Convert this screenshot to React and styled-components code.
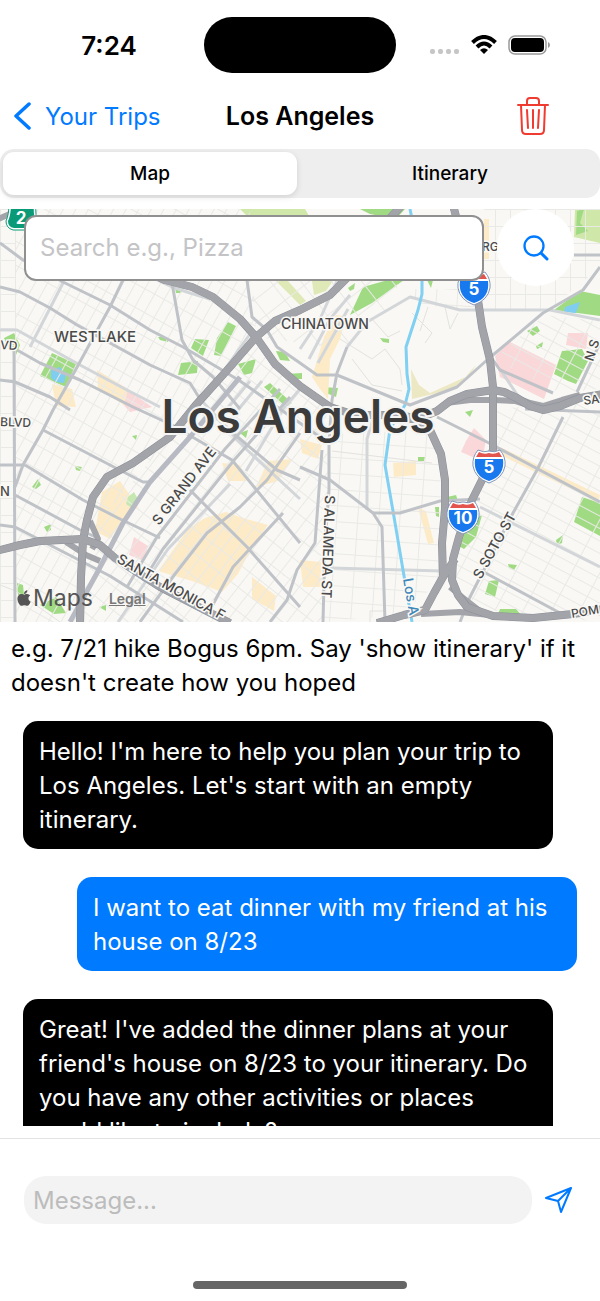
import React, { useState } from 'react';
import styled, { createGlobalStyle } from 'styled-components';
import { FaApple } from 'react-icons/fa';

const messages = [
    { id: 1, from: 'bot', text: "Hello! I'm here to help you plan your trip to Los Angeles. Let's start with an empty itinerary." },
    { id: 2, from: 'user', text: 'I want to eat dinner with my friend at his house on 8/23' },
    { id: 3, from: 'bot', text: "Great! I've added the dinner plans at your friend's house on 8/23 to your itinerary. Do you have any other activities or places you'd like to include?" },
];

const blocks = [
    { id: 'west', grid: 'gridWest', points: '16,0 250,0 256,128 83,331 80,413 16,413' },
    { id: 'edge', grid: 'gridStraight', points: '0,0 16,0 16,413 0,413' },
    { id: 'downtown', grid: 'gridDowntown', points: '256,128 326,200 329,300 322,413 80,413 83,331' },
    { id: 'hills', grid: 'gridHills', points: '250,60 400,60 395,95 345,140 256,128' },
    { id: 'arts', grid: 'gridWide', points: '332,225 428,221 445,270 443,370 400,406 322,413' },
    { id: 'north', grid: 'gridStraight', points: '484,0 600,0 600,58 550,100 482,100' },
    { id: 'flats', grid: 'gridWide', points: '410,80 480,80 480,101 420,96' },
    { id: 'east', grid: 'gridEast', points: '496,200 600,192 600,413 480,400 450,365 492,250' },
    { id: 'heights', grid: 'gridEast', points: '494,150 545,106 600,112 600,180 560,184' },
];

const areas = [
    { color: '#a0db84', points: '52,144 76,155 66,178 40,167' },
    { color: '#a0db84', points: '4,129 14,124 20,136 16,146 8,138' },
    { color: '#a0db84', points: '228,113 236,117 221,147 214,146 217,129' },
    { color: '#a0db84', points: '195,130 209,131 203,147 191,139' },
    { color: '#a0db84', points: '181,154 198,152 197,164 178,166' },
    { color: '#a0db84', points: '158,128 167,128 168,133 160,131' },
    { color: '#a0db84', points: '175,79 183,80 181,84 176,84' },
    { color: '#a0db84', points: '238,155 256,150 252,164 244,166' },
    { color: '#a0db84', points: '264,178 270,174 292,194 286,198' },
    { color: '#a0db84', points: '276,142 285,143 290,152 280,151' },
    { color: '#a0db84', points: '286,165 302,164 302,170 292,170' },
    { color: '#a0db84', points: '322,178 338,179 336,188 326,184' },
    { color: '#a0db84', points: '350,106 363,78 388,71 404,71 372,94' },
    { color: '#cfe7a8', points: '240,0 305,0 312,12 250,10' },
    { color: '#a0db84', points: '360,0 405,0 396,10 370,5' },
    { color: '#dfe9b8', points: '276,72 288,72 306,92 300,96' },
    { color: '#dfe9b8', points: '312,72 334,70 326,82 314,86' },
    { color: '#a0db84', points: '348,79 355,74 354,80 350,82' },
    { color: '#a0db84', points: '427,71 433,71 431,79' },
    { color: '#a0db84', points: '380,129 389,130 389,134 383,133' },
    { color: '#cfe7a8', points: '575,0 600,0 600,34 574,28' },
    { color: '#a0db84', points: '577,2 584,0 580,14 588,22 576,26' },
    { color: '#a0db84', points: '554,101 580,82 600,86 600,107 570,103' },
    { color: '#a0db84', points: '562,142 582,140 588,152 576,175 568,172 554,165' },
    { color: '#a0db84', points: '527,122 537,117 540,122 533,127' },
    { color: '#a0db84', points: '536,137 543,133 542,138 537,140' },
    { color: '#ece8c4', points: '411,160 419,176 430,184 470,166 476,156 455,180 412,190' },
    { color: '#fad7d9', points: '495,147 510,133 556,156 544,190 500,168' },
    { color: '#fad7d9', points: '568,124 588,124 586,140 566,136' },
    { color: '#fad7d9', points: '466,232 474,219 486,231 482,252 461,243' },
    { color: '#fad7d9', points: '128,181 152,198 130,203 122,194' },
    { color: '#fad7d9', points: '134,328 148,337 144,352 129,346' },
    { color: '#fdebc8', points: '97,161 128,180 124,196 98,180' },
    { color: '#fdebc8', points: '52,175 72,180 76,198 56,197' },
    { color: '#fdebc8', points: '102,283 120,272 138,298 126,306 110,330 95,322' },
    { color: '#c5e8b0', points: '128,288 134,283 138,290 132,299 126,295' },
    { color: '#fdebc8', points: '188,320 205,309 226,303 243,309 268,316 251,340 238,365 222,383 192,372 158,362' },
    { color: '#fdebc8', points: '268,252 292,250 278,272 256,278' },
    { color: '#fdebc8', points: '222,254 240,256 246,272 228,272' },
    { color: '#fdebc8', points: '300,351 321,353 322,378 303,378' },
    { color: '#fdebc8', points: '300,230 322,236 318,250 302,244' },
    { color: '#fdebc8', points: '336,106 346,107 340,130 330,150 328,190 320,180 312,168 324,128' },
    { color: '#fdebc8', points: '393,254 416,252 416,266 394,268' },
    { color: '#fdebc8', points: '418,299 426,302 434,334 428,335' },
    { color: '#fdebc8', points: '252,368 276,387 274,402 252,390' },
    { color: '#fdebc8', points: '484,10 489,10 489,50 484,50' },
    { color: '#fdebc8', points: '500,238 600,286 598,293 498,245' },
    { color: '#a0db84', points: '467,313 482,306 476,328 464,340 457,336' },
    { color: '#a0db84', points: '447,288 456,286 458,292 448,292' },
    { color: '#a0db84', points: '465,203 473,201 470,208' },
    { color: '#a0db84', points: '435,298 439,298 439,308 436,307' },
    { color: '#a0db84', points: '582,288 600,294 600,327 574,313' },
    { color: '#a0db84', points: '489,372 499,371 495,388 485,385' },
    { color: '#a0db84', points: '556,331 563,326 562,334 557,336' },
    { color: '#a0db84', points: '508,355 517,356 514,361 509,359' },
    { color: '#a0db84', points: '418,248 425,248 424,252 418,252' },
    { color: '#a0db84', points: '32,278 38,270 41,276 36,280' },
    { color: '#a0db84', points: '44,318 51,315 51,321 47,323' },
    { color: '#a0db84', points: '75,257 82,258 80,262 76,261' },
    { color: '#a0db84', points: '132,227 137,226 136,231' },
    { color: '#a0db84', points: '240,224 248,221 246,229' },
    { color: '#a0db84', points: '17,374 23,376 24,386 18,386' },
    { color: '#a0db84', points: '40,396 56,388 66,404 54,405' },
    { color: '#a0db84', points: '99,398 106,396 106,402' },
    { color: '#a0db84', points: '500,400 516,400 522,407 496,410' },
    { color: '#7fcdf0', points: '51,161 60,158 66,166 64,174 56,173 51,169' },
    { color: '#7fcdf0', points: '565,98 580,93 576,104 564,103' },
];

const streets = [
    '0,78 20,83 50,99 77,116 110,134 150,156 190,174 200,190',
    '0,34 23,51 63,73 110,96 150,121 183,138 217,158 240,172 330,235',
    '123,71 110,98 70,171 53,201 43,221 23,256 15,278',
    '14,138 15,413',
    '172,74 182,131 193,151 213,168 230,188 240,200',
    '17,141 40,154 80,171 133,198 170,215 232,251 300,334',
    '0,171 15,173 50,188 70,201',
    '247,71 252,108 267,121 277,138 300,154 317,166 337,166 410,196 457,178 487,151 543,104 583,81 600,58',
    '347,138 337,164 332,191 329,234 329,281 325,334 323,413',
    '493,151 500,161 553,184',
    '600,134 577,183',
    '563,208 537,261 513,304 470,388 460,413',
    '437,208 487,233 600,293',
    '480,361 560,404',
    '300,258 330,271 373,304 382,318 385,413',
    '373,304 400,304 440,292 480,290',
    '322,241 315,334 297,361 287,391 270,413',
    '43,221 110,256 143,273 150,273',
    '25,256 83,291 118,309 160,329',
    '15,286 80,321 100,330',
    '0,316 15,318 110,367 183,413',
    '0,256 25,256',
    '190,281 247,338 300,398',
    '233,224 277,261 300,271',
    '300,224 267,271 240,298 207,324 175,365 140,413',
    '283,304 233,358 210,401',
    '280,180 225,240 157,328 127,378',
    '290,188 235,250 163,340 143,372',
    '525,200 600,203',
    '600,46 574,46',
];

const lightStreets = [
    '63,74 30,138',
    '0,121 17,121 80,156 127,181 160,198',
    '347,138 367,113 410,88 460,101 550,101 600,111',
    '480,298 600,358',
    '330,359 443,362',
    '373,210 367,230 367,301',
    '300,140 320,110 337,72',
    '309,150 330,110 350,86',
    '318,154 348,100',
    '200,190 247,240',
    '300,180 283,200 246,262',
    '240,170 212,202',
    '250,172 222,206',
    '262,172 232,208',
    '210,202 246,240 300,290',
    '225,160 250,125',
    '155,70 172,78 190,84 210,90',
    '118,413 168,340 230,275',
    '500,160 520,190',
];

const alleys = [
    '332,242 432,254',
    '0,376 16,382 60,413',
    '370,413 370,402 384,402',
    '340,130 372,150 385,140 400,160 402,176',
    '352,150 372,176 402,182',
    '412,104 432,124 425,134',
    '428,98 420,122',
    '445,98 450,120 458,104',
    '372,110 388,128 400,122',
];

const freeways = [
    '90,40 130,55 165,71 192,78 213,88 240,110 256,128 275,155 300,177 330,198 355,206 400,206 418,210 430,221 441,245 445,271 445,300 442,334 443,368',
    '402,-4 380,20 352,64 330,86 300,101 275,112 256,128 230,158 195,197 170,228 133,254 107,268 93,288 87,311 83,331 81,368 80,417',
    '-4,342 20,336 40,332 83,330 100,336 115,349 160,378 230,414',
    '453,-4 462,30 474,70 478,91 482,118 490,151 493,178 493,241 482,271 472,291 459,328 453,350 452,371 458,386 467,398 493,407 533,409 573,405 604,400',
    '400,211 420,209 437,202 450,192 467,185 493,181 504,183 517,189 530,197 543,201 560,197 580,189 604,185',
    '455,350 443,368 434,384 425,401 404,406 377,414',
];

const ramps = [
    '-2,10 12,4 30,14',
    '421,405 460,403 490,406',
    '450,378 462,388 480,402',
    '446,194 470,191 494,191 515,192 530,197',
    '517,189 530,194 543,197 562,191 580,186',
    '66,333 86,346 100,352',
    '90,312 98,330 92,340',
];

const labels = [
    { text: 'WESTLAKE', x: 54, y: 133, size: 15 },
    { text: 'CHINATOWN', x: 281, y: 120, size: 14 },
    { text: 'VD', x: 0, y: 140, size: 12, rotate: 4 },
    { text: 'BLVD', x: 0, y: 217, size: 12, rotate: 2 },
    { text: 'N', x: 0, y: 287, size: 13 },
    { text: 'RG', x: 482, y: 42, size: 12 },
    { text: 'N S', x: 593, y: 153, size: 13, rotate: -72 },
    { text: 'SA', x: 584, y: 196, size: 12, rotate: -8 },
    { text: 'S GRAND AVE', x: 159, y: 317, size: 14, rotate: -52 },
    { text: 'S ALAMEDA ST', x: 325, y: 286, size: 14, rotate: 92 },
    { text: 'SANTA MONICA F', x: 116, y: 353, size: 14, rotate: 29 },
    { text: 'S SOTO ST', x: 481, y: 371, size: 14, rotate: -61 },
    { text: 'POM', x: 572, y: 409, size: 12, rotate: -10 },
    { text: 'Los A', x: 403, y: 370, size: 14, rotate: 80, color: '#3f87b8' },
];

const Shield = ({ x, y, number }) => (
    <g transform={`translate(${x} ${y})`}>
        <path
            d="M-11 -16 Q-5 -13 0 -15 Q5 -13 11 -16 Q17 -9 16 0 Q14 12 0 17 Q-14 12 -16 0 Q-17 -9 -11 -16Z"
            fill="#fff"
            stroke="#8496b8"
            strokeWidth="1"
        />
        <path d="M-10 -14 Q-5 -11 0 -13 Q5 -11 10 -14 L13 -9 H-13Z" fill="#e2544d" />
        <path d="M-14 -7 H14 Q16 10 0 15 Q-16 10 -14 -7Z" fill="#1878ee" />
        <ShieldText y="7">{number}</ShieldText>
    </g>
);

const CityMap = () => (
    <MapDrawing viewBox="0 0 600 413" preserveAspectRatio="xMidYMid slice" role="img" aria-label="Map of Los Angeles">
        <defs>
            <pattern id="gridWest" width="21" height="11" patternUnits="userSpaceOnUse" patternTransform="rotate(-61)">
                <path d="M0 0H21M0 0V11" />
            </pattern>
            <pattern id="gridDowntown" width="19" height="12" patternUnits="userSpaceOnUse" patternTransform="rotate(-52)">
                <path d="M0 0H19M0 0V12" />
            </pattern>
            <pattern id="gridStraight" width="15" height="17" patternUnits="userSpaceOnUse">
                <path d="M0 0H15M0 0V17" />
            </pattern>
            <pattern id="gridWide" width="21" height="16" patternUnits="userSpaceOnUse" patternTransform="rotate(4)">
                <path d="M0 0H21M0 0V16" />
            </pattern>
            <pattern id="gridHills" width="24" height="19" patternUnits="userSpaceOnUse" patternTransform="rotate(-38)">
                <path d="M0 0H24M0 0V19" />
            </pattern>
            <pattern id="gridEast" width="25" height="11" patternUnits="userSpaceOnUse" patternTransform="rotate(28)">
                <path d="M0 0H25M0 0V11" />
            </pattern>
        </defs>
        <rect width="600" height="413" fill="#f9f8f4" />
        {areas.map(({ color, points }) => <polygon key={points} points={points} fill={color} />)}
        {blocks.map(({ id, grid, points }) => <polygon key={id} points={points} fill={`url(#${grid})`} />)}
        <Line $color="#e2e2df" $width={1}>
            {alleys.map((points) => <polyline key={points} points={points} />)}
        </Line>
        <Line $color="#d3d6d9" $width={3}>
            {lightStreets.map((points) => <polyline key={points} points={points} />)}
        </Line>
        <Line $color="#7fd0f2" $width={3}>
            <polyline points="410,0 422,60 422,85 418,101 406,138 407,165 409,180 405,196 390,220 385,256 393,302 403,361 412,413" />
        </Line>
        <Line $color="#bfc3c8" $width={3}>
            {streets.map((points) => <polyline key={points} points={points} />)}
        </Line>
        <Line $color="#b7bac2" $width={5}>
            <polyline points="240,168 190,228 150,273 123,314 97,364 70,413" />
        </Line>
        <Line $color="#a2a4aa" $width={6}>
            {ramps.map((points) => <polyline key={points} points={points} />)}
        </Line>
        <Line $color="#8d9098" $width={8}>
            {freeways.map((points) => <polyline key={points} points={points} />)}
        </Line>
        <Line $color="#a2a4aa" $width={7}>
            {freeways.map((points) => <polyline key={points} points={points} />)}
        </Line>
        {labels.map(({ text, x, y, size, rotate = 0, color }) => (
            <MapLabel
                key={text}
                $size={size}
                $color={color}
                transform={`translate(${x} ${y}) rotate(${rotate})`}
            >
                {text}
            </MapLabel>
        ))}
        <CityLabel x="298" y="224">Los Angeles</CityLabel>
        <path d="M9 -6H36Q35 8 38 12Q37 19 31 21H13Q6 19 6 12Q9 6 9 -6Z" fill="#fff" stroke="#0a9a77" strokeWidth="1" />
        <path d="M11 -6H34Q33 8 36 12Q35 18 30 19H14Q8 18 8 12Q11 6 11 -6Z" fill="#0a9a77" />
        <ShieldText x="21" y="15">2</ShieldText>
        <Shield x={474} y={79} number="5" />
        <Shield x={489} y={257} number="5" />
        <Shield x={463} y={308} number="10" />
    </MapDrawing>
);

const StatusBar = () => (
    <Status>
        <Clock>7:24</Clock>
        <Island />
        <Signals>
            <svg width="30" height="6" viewBox="0 0 30 6" fill="#c6c6c6">
                <rect width="5" height="5" rx="2" />
                <rect x="8" width="5" height="5" rx="2" />
                <rect x="16" width="5" height="5" rx="2" />
                <rect x="24" width="5" height="5" rx="2" />
            </svg>
            <svg width="26" height="20" viewBox="0 0 26 20" fill="none" stroke="#000" strokeWidth="4">
                <path d="M1.500 7.500Q13 -3.500 24.500 7.500" />
                <path d="M6 12Q13 5 20 12" />
                <path d="M9 15Q13 11.500 17 15L13 19Z" fill="#000" stroke="none" />
            </svg>
            <svg width="43" height="20" viewBox="0 0 43 20">
                <rect x="1" y="1" width="37" height="18" rx="6" fill="none" stroke="#999" strokeWidth="1.500" />
                <rect x="3" y="3" width="33" height="14" rx="4" />
                <path d="M40 7Q42 8 42 10T40 13Z" fill="#999" />
            </svg>
        </Signals>
    </Status>
);

const App = () => {
    const [tab, setTab] = useState('Map');

    return (
        <Screen>
            <GlobalStyle />
            <StatusBar />
            <NavBar>
                <BackLink href="#trips">
                    <svg width="18" height="30" viewBox="0 0 18 30" fill="none" stroke="currentColor" strokeWidth="3.500" strokeLinecap="round" strokeLinejoin="round">
                        <path d="M15 3L2 15L15 27" />
                    </svg>
                    Your Trips
                </BackLink>
                <Title>Los Angeles</Title>
                <DeleteButton aria-label="Delete trip">
                    <svg width="32" height="38" viewBox="0 0 32 38" fill="none" stroke="currentColor" strokeWidth="2" strokeLinecap="round" strokeLinejoin="round">
                        <path d="M1 8H31M10 8V4Q10 1 13 1H19Q22 1 22 4V8" />
                        <path d="M4 8L5 33Q5 37 9 37H23Q27 37 27 33L28 8" />
                        <path d="M10 13L11 31M16 13V31M22 13L21 31" />
                    </svg>
                </DeleteButton>
            </NavBar>
            <Tabs role="tablist">
                {['Map', 'Itinerary'].map((name) => (
                    <Tab key={name} role="tab" aria-selected={tab === name} $active={tab === name} onClick={() => setTab(name)}>
                        {name}
                    </Tab>
                ))}
            </Tabs>
            <MapPanel>
                <CityMap />
                <SearchBar>
                    <SearchInput type="text" aria-label="Search places" placeholder="Search e.g., Pizza" />
                    <SearchButton aria-label="Search">
                        <svg width="26" height="26" viewBox="0 0 26 26" fill="none" stroke="currentColor" strokeWidth="2.300" strokeLinecap="round">
                            <circle cx="11" cy="11" r="9.500" />
                            <path d="M18 18L24 24" strokeWidth="3" />
                        </svg>
                    </SearchButton>
                </SearchBar>
                <Attribution>
                    <MapsBrand><FaApple size={18} />Maps</MapsBrand>
                    <LegalLink href="#legal">Legal</LegalLink>
                </Attribution>
            </MapPanel>
            <Hint>e.g. 7/21 hike Bogus 6pm. Say 'show itinerary' if it doesn't create how you hoped</Hint>
            <Chat>
                {messages.map(({ id, from, text }) => <Bubble key={id} $user={from === 'user'}>{text}</Bubble>)}
            </Chat>
            <Composer>
                <MessageInput type="text" aria-label="Message" placeholder="Message..." />
                <SendButton aria-label="Send">
                    <svg width="28" height="28" viewBox="0 0 28 28" fill="none" stroke="currentColor" strokeWidth="2" strokeLinejoin="round">
                        <path d="M26 2L1 12L13 15L16 26ZM13 15L26 2" />
                    </svg>
                </SendButton>
            </Composer>
            <HomeIndicator />
        </Screen>
    );
};

export default App;

const GlobalStyle = createGlobalStyle`
  * {
    box-sizing: border-box;
  }
  body {
    margin: 0;
    background: white;
    color: black;
    font-family: Inter, "Liberation Sans", sans-serif;
  }
  button, input {
    font-family: inherit;
  }
`
const Screen = styled.div`
  display: flex;
  flex-direction: column;
  width: 100%;
  height: 100vh;
  background: white;
`
const Status = styled.div`
  display: grid;
  grid-template-columns: 1fr 192px 1fr;
  align-items: center;
  flex: none;
  padding: 17px 0;
`
const Clock = styled.span`
  padding-left: 14px;
  font-size: 26px;
  font-weight: 600;
  text-align: center;
`
const Island = styled.div`
  height: 56px;
  border-radius: 28px;
  background: black;
`
const Signals = styled.div`
  display: flex;
  align-items: center;
  gap: 11px;
  padding-left: 34px;
  svg:first-child {
    margin-top: 13px;
  }
`
const NavBar = styled.header`
  display: grid;
  grid-template-columns: 1fr auto 1fr;
  align-items: center;
  flex: none;
  height: 52px;
  padding: 0 51px 0 14px;
`
const BackLink = styled.a`
  display: flex;
  align-items: center;
  gap: 13px;
  color: #007aff;
  font-size: 24px;
  text-decoration: none;
`
const Title = styled.h1`
  margin: 0 0 0 37px;
  font-size: 25px;
  font-weight: 600;
`
const IconButton = styled.button`
  display: flex;
  align-items: center;
  justify-content: center;
  flex: none;
  padding: 0;
  border: 0;
  background: none;
  color: #007aff;
  cursor: pointer;
`
const DeleteButton = styled(IconButton)`
  justify-self: end;
  color: #f03b30;
`
const Tabs = styled.div`
  display: flex;
  gap: 6px;
  flex: none;
  height: 49px;
  margin: 7px 0 11px;
  padding: 3px;
  border-radius: 14px;
  background: #eeeeee;
`
const Tab = styled.button`
  flex: 1;
  border: 0;
  border-radius: 11px;
  background: ${({ $active }) => ($active ? 'white' : 'transparent')};
  box-shadow: ${({ $active }) => ($active ? '0 2px 6px rgba(0, 0, 0, 0.12)' : 'none')};
  color: black;
  font-size: 19px;
  font-weight: 500;
`
const MapPanel = styled.section`
  position: relative;
  flex: none;
  aspect-ratio: 600 / 413;
  overflow: hidden;
`
const MapDrawing = styled.svg`
  display: block;
  width: 100%;
  height: 100%;
  pattern path {
    fill: none;
    stroke: #e9e9e6;
    stroke-width: 2;
  }
`
const Line = styled.g`
  fill: none;
  stroke: ${({ $color }) => $color};
  stroke-width: ${({ $width }) => $width};
  stroke-linejoin: round;
`
const MapLabel = styled.text`
  fill: ${({ $color }) => $color || '#4a4a4a'};
  stroke: #faf9f6;
  stroke-width: 3;
  paint-order: stroke;
  font-size: ${({ $size }) => $size}px;
  font-weight: 500;
`
const CityLabel = styled.text`
  fill: #3b3b3b;
  stroke: #f4f4f2;
  stroke-width: 4;
  paint-order: stroke;
  font-size: 46px;
  font-weight: 600;
  text-anchor: middle;
`
const ShieldText = styled.text`
  fill: white;
  font-size: 17px;
  font-weight: 700;
  text-anchor: middle;
`
const SearchBar = styled.div`
  position: absolute;
  top: 0;
  left: 24px;
  right: 26px;
  display: flex;
  align-items: center;
  gap: 13px;
`
const SearchInput = styled.input`
  flex: 1;
  min-width: 0;
  height: 66px;
  padding: 0 14px;
  border: 2px solid #909090;
  border-radius: 12px;
  background: white;
  font-size: 24px;
  &::placeholder {
    color: #c4c4c6;
  }
`
const SearchButton = styled(IconButton)`
  width: 77px;
  height: 77px;
  border-radius: 50%;
  background: white;
`
const Attribution = styled.div`
  position: absolute;
  left: 15px;
  bottom: 8px;
  display: flex;
  align-items: center;
  gap: 16px;
  color: #555555;
`
const MapsBrand = styled.span`
  display: flex;
  align-items: center;
  font-size: 23px;
  line-height: 32px;
`
const LegalLink = styled.a`
  color: #777777;
  font-size: 14px;
  font-weight: 600;
`
const Hint = styled.p`
  flex: none;
  margin: 0;
  padding: 10px 11px 21px;
  font-size: 24px;
  line-height: 34px;
`
const Chat = styled.div`
  display: flex;
  flex-direction: column;
  gap: 28px;
  flex: 1;
  min-height: 0;
  margin-bottom: 12px;
  padding: 0 23px;
  overflow-y: auto;
  scrollbar-width: none;
`
const Bubble = styled.p`
  flex: none;
  align-self: ${({ $user }) => ($user ? 'flex-end' : 'flex-start')};
  max-width: ${({ $user }) => ($user ? '500px' : '530px')};
  margin: 0;
  padding: 14px 16px 12px;
  border-radius: 15px;
  background: ${({ $user }) => ($user ? '#007aff' : 'black')};
  color: white;
  font-size: 24px;
  line-height: 34px;
`
const Composer = styled.div`
  display: flex;
  align-items: center;
  gap: 13px;
  flex: none;
  padding: 37px 27px 57px 24px;
  border-top: 1px solid #e4e4e4;
`
const MessageInput = styled.input`
  flex: 1;
  min-width: 0;
  height: 48px;
  padding: 0 9px;
  border: 0;
  border-radius: 22px;
  background: #f3f3f3;
  font-size: 24px;
  &::placeholder {
    color: #bcbcbc;
  }
`
const SendButton = styled(IconButton)`
  width: 28px;
  height: 28px;
`
const HomeIndicator = styled.div`
  align-self: center;
  flex: none;
  width: 214px;
  height: 8px;
  margin-bottom: 12px;
  border-radius: 4px;
  background: #666666;
`
